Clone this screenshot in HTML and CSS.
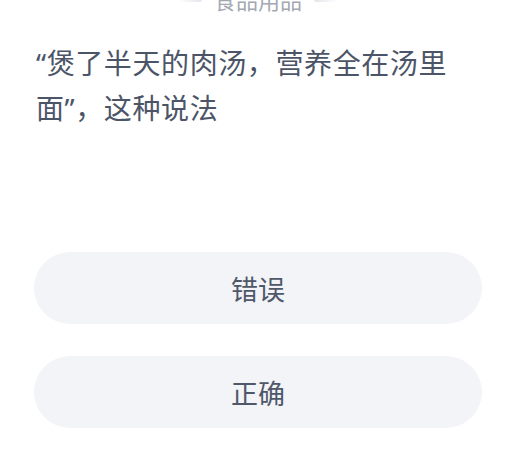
FILE: index.html
```html
<!DOCTYPE html>
<html lang="zh-CN">
<head>
  <meta charset="UTF-8">
  <title>答题</title>
  <link rel="stylesheet" href="styles.css">
</head>
<body>

<div class="quiz">
  <div class="category">
    <span class="line left"></span>
    <span class="label">食品用品</span>
    <span class="line right"></span>
  </div>

  <p class="question"><span class="quote">“</span>煲了半天的肉汤，营养全在汤里面<span class="quote">”</span>，这种说法</p>

  <div class="options">
    <button class="option">错误</button>
    <button class="option">正确</button>
  </div>
</div>

</body>
</html>
```

FILE: styles.css
```css
* { box-sizing: border-box; }
body { margin: 0; padding: 0; background: #fff; font-family: "Noto Sans CJK SC", "Noto Sans", sans-serif; }

.quiz { width: 516px; height: 473px; overflow: hidden; }

.category { display: flex; align-items: center; justify-content: center; gap: 12px; margin-top: -14px; height: 26px; }
.category .label { font-size: 22px; line-height: 26px; color: #a3a8b3; }
.category .line { width: 24px; height: 5px; border-radius: 3px; }
.category .line.left { background: linear-gradient(to right, rgba(225,228,234,0), #e1e4ea); }
.category .line.right { background: linear-gradient(to left, rgba(225,228,234,0), #e1e4ea); }

.question { margin: 28px 0 0; padding: 0 30px 0 36px; font-size: 28px; line-height: 44px; letter-spacing: 0.6px; color: #4c5567; }
.question .quote { font-family: "Noto Sans", "DejaVu Sans", sans-serif; }

.options { display: flex; flex-direction: column; gap: 32px; padding: 0 34px; margin-top: 122px; }
.option { height: 72px; border: none; border-radius: 36px; background: #f3f4f7; color: #4f5869; font-family: inherit; font-size: 27px; cursor: pointer; }
```
